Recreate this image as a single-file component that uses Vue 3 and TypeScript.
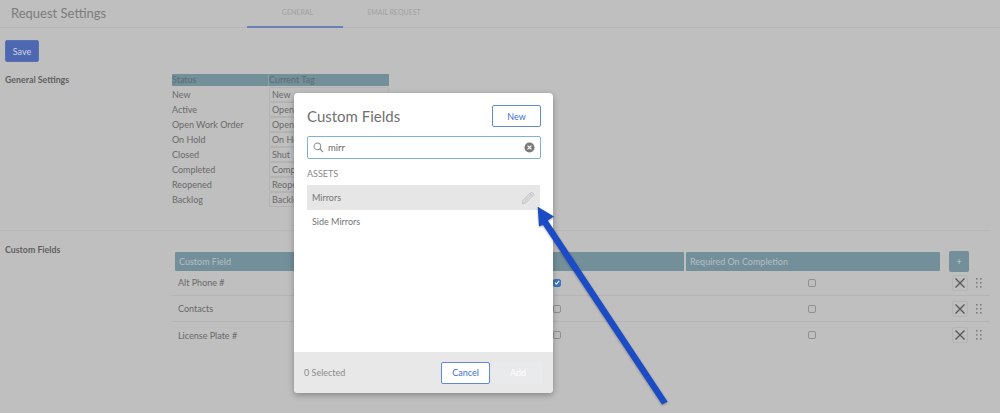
<template>
  <div class="page">
    <header class="top">
      <h1 class="title">Request Settings</h1>
      <nav class="tabs">
        <a class="tab active">GENERAL</a>
        <a class="tab wide">EMAIL REQUEST</a>
      </nav>
    </header>

    <div class="toolbar"><button class="save">Save</button></div>

    <section class="general">
      <div class="section-label">General Settings</div>
      <div class="tags">
        <div class="tags-head">Status</div>
        <div class="tags-head second">Current Tag</div>
        <template v-for="row in statusRows" :key="row.status">
          <div class="tag-status">{{ row.status }}</div>
          <div class="tag-input">{{ row.tag }}</div>
        </template>
      </div>
    </section>

    <section class="custom">
      <div class="section-label">Custom Fields</div>
      <div class="fields">
        <div class="fields-head">
          <div class="head-cell">Custom Field</div>
          <div class="head-cell"></div>
          <div class="head-cell">Required On Completion</div>
          <button class="plus">+</button>
        </div>
        <div class="field-row" v-for="field in customFields" :key="field.name">
          <div class="field-name">{{ field.name }}</div>
          <div class="check-cell">
            <span class="check" :class="{ on: field.shown }">
              <svg v-if="field.shown" viewBox="0 0 10 10" width="7" height="7">
                <path d="M1.5 5.2 4 7.7 8.6 2.2" fill="none" stroke="#fff" stroke-width="1.8" />
              </svg>
            </span>
          </div>
          <div class="check-cell"><span class="check"></span></div>
          <div class="actions">
            <button class="remove">
              <svg viewBox="0 0 12 12" width="12" height="12">
                <path d="M1.5 1.5 10.5 10.5M10.5 1.5 1.5 10.5" stroke="#555" stroke-width="1.3" fill="none" />
              </svg>
            </button>
            <svg class="grip" viewBox="0 0 6 10" width="6" height="10">
              <g fill="#7d7d7d">
                <rect v-for="d in gripDots" :key="d.k" :x="d.x" :y="d.y" width="1.6" height="1.6" />
              </g>
            </svg>
          </div>
        </div>
      </div>
    </section>

    <!-- Dialog lying over the dimmed page -->
    <div class="modal">
      <div class="modal-body">
        <div class="modal-head">
          <h2 class="modal-title">Custom Fields</h2>
          <button class="outline">New</button>
        </div>
        <div class="search">
          <svg viewBox="0 0 12 12" width="11" height="11">
            <circle cx="4.8" cy="4.8" r="3.6" fill="none" stroke="#8a8a8a" stroke-width="1.1" />
            <path d="M7.5 7.5 11 11" stroke="#8a8a8a" stroke-width="1.3" />
          </svg>
          <span class="search-text">mirr</span>
          <svg class="clear" viewBox="0 0 12 12" width="11" height="11">
            <circle cx="6" cy="6" r="5.5" fill="#7a7a7a" />
            <path d="M3.9 3.9 8.1 8.1M8.1 3.9 3.9 8.1" stroke="#fff" stroke-width="1.3" />
          </svg>
        </div>
        <div class="group">ASSETS</div>
        <div class="option selected">
          Mirrors
          <svg viewBox="0 0 16 16" width="14" height="14">
            <path d="M1.5 14.5 2.4 10.6 10.8 2.2C11.6 1.4 12.6 1.4 13.4 2.2L13.8 2.6C14.6 3.4 14.6 4.4 13.8 5.2L5.4 13.6Z" fill="#dedede" stroke="#c2c2c2" stroke-width="1.1" />
            <path d="M4 12 12.2 3.8M10 3 13 6" fill="none" stroke="#c2c2c2" stroke-width="0.9" />
          </svg>
        </div>
        <div class="option">Side Mirrors</div>
      </div>
      <div class="modal-foot">
        <span class="selected-count">0 Selected</span>
        <button class="outline cancel">Cancel</button>
        <button class="add">Add</button>
      </div>
    </div>

    <!-- Annotation arrow -->
    <svg class="arrow" viewBox="0 0 1000 413" width="1000" height="413">
      <polygon points="537.7,206.7 554,216.5 547.8,220.4 667.7,401.7 662,404.6 543,225 539,226.5" fill="#1c4bc6" />
    </svg>
  </div>
</template>

<script setup lang="ts">
const statusRows = [
  { status: 'New', tag: 'New' },
  { status: 'Active', tag: 'Open' },
  { status: 'Open Work Order', tag: 'Open' },
  { status: 'On Hold', tag: 'On Hold' },
  { status: 'Closed', tag: 'Shut' },
  { status: 'Completed', tag: 'Complete' },
  { status: 'Reopened', tag: 'Reopen' },
  { status: 'Backlog', tag: 'Backlog' },
]

const customFields = [
  { name: 'Alt Phone #', shown: true },
  { name: 'Contacts', shown: false },
  { name: 'License Plate #', shown: false },
]

// two columns of three dots for the drag handle
const gripDots = [0, 1, 2].flatMap((r) =>
  [0, 1].map((c) => ({ k: `${r}-${c}`, x: c * 4, y: r * 4 })),
)
</script>

<style>
html,
body {
  margin: 0;
  background: #bfbfbf;
}
</style>

<style scoped>
.page {
  position: relative;
  width: 1000px;
  height: 413px;
  overflow: hidden;
  background: #bfbfbf;
  color: #696969;
  font-family: Lato, "Open Sans", sans-serif;
  font-size: 9px;
}

button {
  font-family: inherit;
}

.top {
  display: flex;
  height: 28px;
  box-sizing: border-box;
  border-bottom: 1px solid #b6b6b6;
}
.title {
  width: 236px;
  margin: 3px 0 0 11px;
  font-size: 13px;
  font-weight: 400;
  line-height: 20px;
  color: #7c7c7c;
}
.tabs {
  display: flex;
  height: 28px;
}
.tab {
  width: 96px;
  box-sizing: border-box;
  padding-top: 7px;
  text-align: center;
  font-size: 7px;
  line-height: 11px;
  color: #a2a2a2;
}
.tab.wide {
  width: 102px;
}
.tab.active {
  padding-left: 5px;
  border-bottom: 2px solid #6a81b5;
}

.toolbar {
  padding: 12px 0 0 5px;
}
.save {
  display: block;
  width: 34px;
  height: 22px;
  padding: 0;
  border: 1px solid #5a72b4;
  border-radius: 2px;
  background: #4d68b0;
  color: #cfd6e8;
  font-size: 9px;
}

.general {
  display: grid;
  grid-template-columns: 167px 217px;
  padding: 12px 0 0 5px;
  height: 156px;
  margin-right: 10px;
  border-bottom: 1px solid #b8b8b8;
}
.section-label {
  font-size: 8.8px;
  font-weight: 700;
  line-height: 12px;
  color: #5f5f5f;
}
.tags {
  display: grid;
  grid-template-columns: 96px 121px;
  grid-template-rows: 13px;
  grid-auto-rows: 15px;
  align-content: start;
}
.tags-head {
  height: 12px;
  line-height: 12px;
  background: #738f9a;
  color: #5b6c73;
  font-size: 9px;
}
.tags-head.second {
  border-left: 1px solid #8a9ea6;
}
.tag-status {
  line-height: 15px;
}
.tag-input {
  margin-left: 1px;
  padding-left: 2px;
  border: 1px solid #b3b3b3;
  border-radius: 2px;
  line-height: 13px;
}

.custom {
  display: grid;
  grid-template-columns: 167px 1fr;
  padding: 13px 10px 0 5px;
}
.fields {
  margin-top: 7px;
}
.fields-head {
  display: grid;
  grid-template-columns: 253px 254px 254px 20px;
  column-gap: 2px;
  margin-bottom: -2px;
  padding-left: 3px;
  align-items: center;
}
.head-cell {
  height: 19px;
  padding-left: 4px;
  box-sizing: border-box;
  line-height: 19px;
  background: #738f9a;
  border-radius: 1px;
  color: #b5bfc3;
}
.plus {
  margin-left: 7px;
  width: 20px;
  height: 21px;
  padding: 0;
  border: none;
  border-radius: 2px;
  background: #738f9a;
  color: #c3ccd0;
  font-size: 9px;
}
.field-row {
  display: grid;
  grid-template-columns: 258px 254px 256px 1fr;
  height: 26px;
  box-sizing: border-box;
  border-bottom: 1px solid #b4b4b4;
  align-items: center;
}
.field-row:last-child {
  border-bottom: none;
}
.field-name {
  padding-left: 6px;
}
.check-cell {
  display: flex;
  justify-content: center;
}
.check {
  display: flex;
  align-items: center;
  justify-content: center;
  width: 6px;
  height: 6px;
  border: 1px solid #8f8f8f;
  border-radius: 2px;
}
.check.on {
  background: #3b74bd;
  border-color: #3b74bd;
}
.actions {
  display: flex;
  align-items: center;
  padding-left: 12px;
  gap: 8px;
}
.remove {
  display: flex;
  align-items: center;
  justify-content: center;
  width: 16px;
  height: 16px;
  padding: 0;
  border: 1px solid #b5b5b5;
  border-radius: 2px;
  background: transparent;
}

.modal {
  position: absolute;
  left: 294px;
  top: 93px;
  display: flex;
  flex-direction: column;
  width: 259px;
  height: 300px;
  overflow: hidden;
  border-radius: 4px;
  background: #fff;
  box-shadow: 0 2px 6px rgba(0, 0, 0, 0.3);
}
.modal-body {
  flex: 1;
  padding: 12px 12px 0 13px;
}
.modal-head {
  display: flex;
  align-items: center;
  justify-content: space-between;
}
.modal-title {
  margin: 0;
  font-size: 15px;
  font-weight: 400;
  color: #707070;
}
.outline {
  width: 49px;
  height: 22px;
  padding: 0;
  border: 1px solid #6088dc;
  border-radius: 2px;
  background: #fff;
  color: #4070d0;
  font-size: 9px;
}
.search {
  display: flex;
  align-items: center;
  gap: 4px;
  height: 23px;
  margin-top: 9px;
  padding: 0 5px;
  box-sizing: border-box;
  border: 1px solid #7fb0d8;
  border-radius: 2px;
}
.search-text {
  flex: 1;
  color: #6a6a6a;
  font-size: 9.5px;
}
.group {
  margin-top: 9px;
  line-height: 12px;
  color: #8a8a8a;
}
.option {
  display: flex;
  align-items: center;
  justify-content: space-between;
  height: 23px;
  margin-right: 1px;
  padding: 0 5px;
  color: #757575;
}
.option.selected {
  height: 25px;
  margin-top: 5px;
  background: #e6e6e6;
}
.modal-foot {
  display: flex;
  align-items: center;
  height: 41px;
  padding: 0 10px;
  background: #e8e8e8;
}
.selected-count {
  flex: 1;
  color: #8c8c8c;
}
.cancel {
  margin-right: 3px;
}
.add {
  width: 50px;
  height: 22px;
  padding: 0;
  border: none;
  border-radius: 2px;
  background: #e9eaec;
  color: #fff;
  font-size: 9px;
}

.arrow {
  position: absolute;
  left: 0;
  top: 0;
  filter: drop-shadow(0 1px 1px rgba(0, 0, 0, 0.3));
  pointer-events: none;
}
</style>
